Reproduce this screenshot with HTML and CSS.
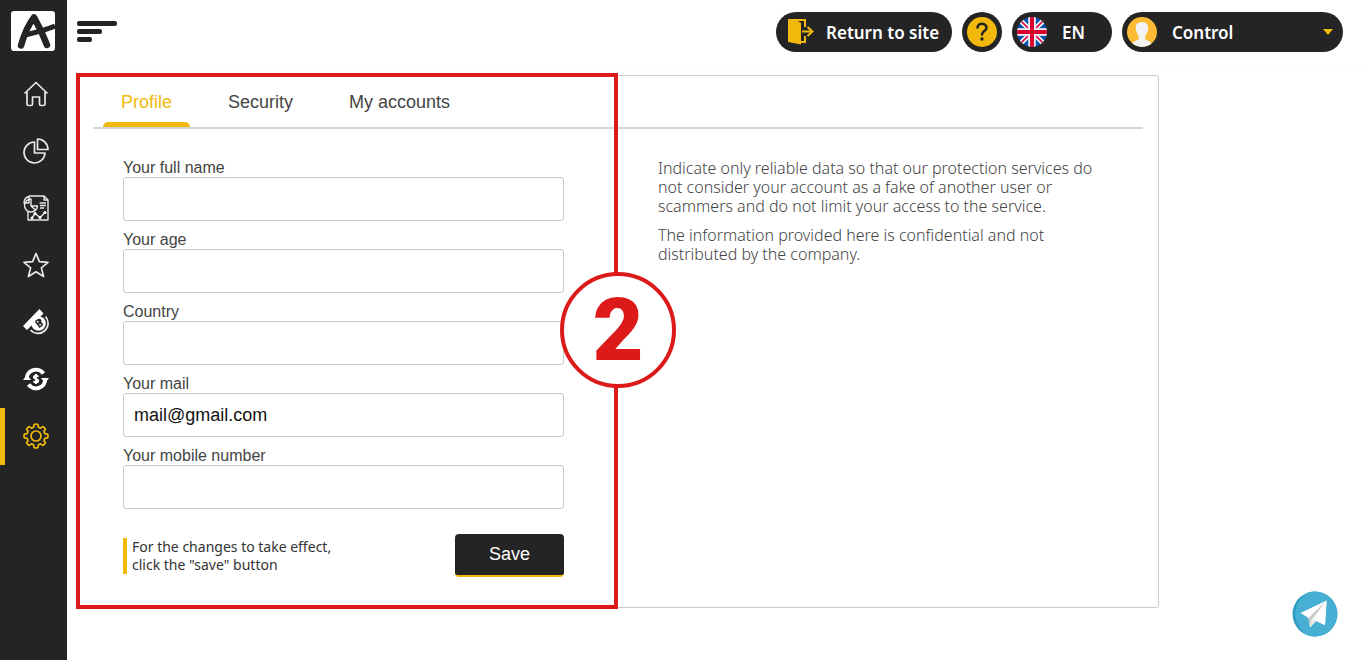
FILE: index.html
```html
<!DOCTYPE html>
<html lang="en">
<head>
<meta charset="utf-8">
<title>Profile settings</title>
<link rel="stylesheet" href="styles.css">
</head>
<body>
<aside class="sidebar">
  <a class="logo" href="#" aria-label="Home page">
    <svg width="44" height="40" viewBox="0 0 44 40"><rect width="44" height="40" rx="3" fill="#fff"/><path d="M10 34.500C13 24 17 14 23 6.500C28 15 33 26 36 34" fill="none" stroke="#242424" stroke-width="6.500" stroke-linecap="round" stroke-linejoin="round"/><path d="M12 24.500C20 22.500 32 20 44 15" fill="none" stroke="#242424" stroke-width="5"/></svg>
  </a>
  <nav class="menu" aria-label="Main">
    <a href="#" aria-label="Dashboard"><svg viewBox="0 0 26 26"><path d="M1.500 12.500 13 1.500 24.500 12.500M4 11V23Q4 24.500 5.500 24.500H8Q9.500 24.500 9.500 23V16H16.500V23Q16.500 24.500 18 24.500H20.500Q22 24.500 22 23V11" /></svg></a>
    <a href="#" aria-label="Statistics"><svg viewBox="0 0 26 26"><path d="M11.500 4A10.500 10.500 0 1 0 22 15H11.500Z"/><path d="M14.500 1V11.500H25A10.500 10.500 0 0 0 14.500 1Z"/></svg></a>
    <a class="report" href="#" aria-label="Reports"><svg viewBox="0 0 26 26"><path d="M6 1H21L25 5V25H5V17M21 1V5H25"/><path d="M8 4A6.500 6.500 0 1 0 14.500 11H8ZM6 1.500V8H1A6 6 0 0 1 6 1.500ZM8 11 13 15.500M16.500 8H23M17 10.500H23M17 13H21"/><path d="M9 23 12 18.500 17 22.500 22 17.500"/><g class="solid"><circle cx="9" cy="23" r="1.500"/><circle cx="12" cy="18.500" r="1.500"/><circle cx="17" cy="22.500" r="1.500"/><circle cx="22" cy="17.500" r="1.500"/></g></svg></a>
    <a href="#" aria-label="Favourites"><svg viewBox="0 0 26 26"><path d="M13 1.500 16.400 9.700 25 10.300 18.400 15.900 20.600 24.500 13 19.800 5.400 24.500 7.600 15.900 1 10.300 9.600 9.700Z"/></svg></a>
    <a href="#" aria-label="Payouts"><svg viewBox="0 0 26 26"><path class="solid" d="M0 17 16.500 0 20.500 4.500 4 21Z"/><circle class="solid" cx="15.500" cy="14.500" r="7.300"/><path d="M22.500 7.500A9.700 9.700 0 1 1 7.500 21"/><path class="mark" d="M12.500 12.500 17 18M15 10.500 18.500 15M12.500 12.500 15 10.800C18 10 19 12.500 16 14.500C19 13 20.500 15.500 17.500 17.500L16 18.500M14 15 16 14"/></svg></a>
    <a href="#" aria-label="Exchange"><svg viewBox="0 0 26 26"><path class="ring" d="M3.700 13A9.300 9.300 0 0 1 20.500 7.500M22.300 13A9.300 9.300 0 0 1 5.500 18.500"/><path class="solid" d="M0 14 4 8.500 8 14ZM18 12 22 17.500 26 12Z"/><path class="dollar" d="M15.300 10.700C14.500 9.200 10.700 9.400 10.900 11.300C11 13.500 15.200 12.400 15.200 14.800C15.200 16.800 11.600 16.800 10.600 15.300M13 8V18"/></svg></a>
    <a class="active" href="#" aria-label="Settings" aria-current="page"><svg viewBox="0 0 26 26"><path d="M10.600 4.200 11.100 1.500Q13 .5 14.900 1.500L15.400 4.200 17.500 5.100 19.800 3.600Q21.800 4.200 22.400 6.200L20.900 8.500 21.800 10.600 24.500 11.100Q25.500 13 24.500 14.900L21.800 15.400 20.900 17.500 22.400 19.800Q21.800 21.800 19.800 22.400L17.500 20.900 15.400 21.800 14.900 24.500Q13 25.500 11.100 24.500L10.600 21.800 8.500 20.900 6.200 22.400Q4.200 21.800 3.600 19.800L5.100 17.500 4.200 15.400 1.500 14.900Q.5 13 1.500 11.100L4.200 10.600 5.100 8.500 3.600 6.200Q4.200 4.200 6.200 3.600L8.500 5.100Z"/><circle cx="13" cy="13" r="5"/></svg></a>
  </nav>
</aside>
<div class="page">
  <header class="topbar">
    <button class="burger" type="button" aria-label="Toggle menu"><i></i><i></i><i></i></button>
    <div class="actions">
      <a class="pill return" href="#"><svg width="28" height="26" viewBox="0 0 28 26"><path d="M0 0H18V8H16V2H10L13 4V22H16V17H18V24H13V25.500L0 23Z" fill="#f0b90b"/><path d="M14 12.500H24M19.500 8 24.500 12.500 19.500 17" fill="none" stroke="#f0b90b" stroke-width="2"/></svg>Return to site</a>
      <button class="help" type="button" aria-label="Help"><svg width="30" height="30" viewBox="0 0 30 30"><circle cx="15" cy="15" r="15" fill="#f0b90b"/><path d="M10.500 10.500C10.500 5.500 20 5.500 19.500 11C19.300 14 15 14 15 17.500" fill="none" stroke="#242424" stroke-width="2.600" stroke-linecap="round"/><circle cx="15" cy="22" r="1.700" fill="#242424"/></svg></button>
      <button class="pill language" type="button"><svg width="30" height="30" viewBox="0 0 30 30"><defs><clipPath id="flag"><circle cx="15" cy="15" r="15"/></clipPath></defs><g clip-path="url(#flag)"><path fill="#0a52ad" d="M0 0H30V30H0Z"/><path d="M2 2 28 28M28 2 2 28" stroke="#f2f2f2" stroke-width="5"/><path d="M2 2 28 28M28 2 2 28" stroke="#d80030" stroke-width="1.600"/><path d="M15 0V30M0 15H30" stroke="#f2f2f2" stroke-width="7.500"/><path d="M15 0V30M0 15H30" stroke="#d80030" stroke-width="4"/></g></svg>EN</button>
      <button class="pill account" type="button"><svg width="30" height="30" viewBox="0 0 30 30"><defs><clipPath id="face"><circle cx="15" cy="15" r="15"/></clipPath></defs><g clip-path="url(#face)"><path fill="#fdbb35" d="M0 0H30V30H0Z"/><path fill="#f2f2f2" d="M15 5C10 5 8.500 8 9 12C8.500 12 9 15 10 15.500C10.500 18 12 19 12 21C12 24 5 23 4 30H26C25 23 18 24 18 21C18 19 19.500 18 20 15.500C21 15 21.500 12 21 12C21.500 8 20 5 15 5Z"/></g></svg><span>Control</span><svg class="caret" width="10" height="6" viewBox="0 0 10 6"><path d="M0 0H10L5 6Z" fill="#f0b90b"/></svg></button>
    </div>
  </header>
  <main class="content">
    <section class="card">
      <nav class="tabs" aria-label="Settings sections">
        <a class="current" href="#">Profile</a><a href="#">Security</a><a href="#">My accounts</a>
      </nav>
      <div class="columns">
        <form class="profile">
          <div class="field"><label for="name">Your full name</label><input id="name" type="text"></div>
          <div class="field"><label for="age">Your age</label><input id="age" type="text"></div>
          <div class="field"><label for="country">Country</label><input id="country" type="text"></div>
          <div class="field"><label for="mail">Your mail</label><input id="mail" type="email" value="mail@gmail.com"></div>
          <div class="field"><label for="phone">Your mobile number</label><input id="phone" type="tel"></div>
          <div class="submit"><p>For the changes to take effect,<br>click the "save" button</p><button type="submit">Save</button></div>
        </form>
        <div class="info">
          <p>Indicate only reliable data so that our protection services do<br>not consider your account as a fake of another user or<br>scammers and do not limit your access to the service.</p>
          <p>The information provided here is confidential and not<br>distributed by the company.</p>
        </div>
      </div>
      <div class="highlight"><span class="step">2</span></div>
    </section>
  </main>
</div>
<a class="telegram" href="#" aria-label="Telegram"><svg width="46" height="46" viewBox="0 0 46 46"><circle cx="23" cy="23" r="22.500" fill="#2e9cc0"/><path d="M23 .5A22.500 22.500 0 1 1 16 44.500C-1 34 -1 12 16 1.500Q19 .5 23 .5Z" fill="#46afd3"/><path d="M8.500 22 34.500 9.500 33 34 24 30 18 36.500 16.500 27Z" fill="#fff"/><path d="M16.500 27 34.500 9.500 19.500 29 18 36.500Z" fill="#c9c9c9"/><path d="M19.500 29 34.500 9.500 24 30 18 36.500Z" fill="#e8e8e8"/><path d="M21 28.500 34.500 9.500 33 34Z" fill="#fff"/></svg></a>
</body>
</html>
```
FILE: styles.css
```css
* { box-sizing: border-box; }
body { margin: 0; min-height: 100vh; display: flex; background: #fff; color: #444; font-family: "Liberation Sans", Arial, sans-serif; }
a { color: inherit; text-decoration: none; }
button, input { font: inherit; }
button { border: 0; cursor: pointer; }
svg { display: block; flex: none; }
.sidebar { flex: none; width: 67px; background: #242424; }
.logo { display: block; padding: 11px 11px 15px; }
.menu a { display: flex; align-items: center; justify-content: center; height: 57px; padding: 0 0 2px 4px; color: #e8e8e8; }
.menu a.active { padding-left: 0; border-left: 5px solid #f0b90b; color: #f0b90b; }
.menu svg { width: 26px; height: 26px; fill: none; stroke: currentColor; stroke-width: 1.700; stroke-linejoin: round; }
.menu .report svg { stroke-width: 1.400; }
.menu .solid { fill: #fff; stroke: none; }
.menu .mark { stroke: #242424; stroke-width: 1.500; }
.menu .ring { stroke: #fff; stroke-width: 4; }
.menu .dollar { stroke: #fff; stroke-width: 2; }
.page { flex: 1; min-width: 0; }
.topbar { display: flex; align-items: flex-start; justify-content: space-between; height: 67px; padding: 12px 23px 0 10px; border-bottom: 1px solid #f9f9f9; }
.burger { display: grid; gap: 3px; padding: 9px 0; background: none; }
.burger i { width: 40px; height: 5px; border-radius: 2px; background: #242424; }
.burger i:nth-child(2) { width: 25px; }
.burger i:nth-child(3) { width: 15px; }
.actions { display: flex; gap: 10px; font: 600 17px "Noto Sans", sans-serif; }
.pill { display: flex; align-items: center; height: 40px; border-radius: 20px; background: #242424; color: #fff; white-space: nowrap; }
.return { gap: 10px; width: 176px; padding-left: 12px; }
.help { width: 40px; height: 40px; padding: 5px; border-radius: 50%; background: #242424; }
.language { gap: 15px; width: 100px; padding: 0 5px; }
.account { gap: 15px; width: 221px; padding: 0 10px 0 5px; }
.caret { margin-left: auto; }
.content { padding: 8px 10px 20px; }
.card { position: relative; max-width: 1082px; border: 1px solid #ccc; border-radius: 3px; padding: 0 15px; }
.tabs { display: flex; gap: 20px; height: 53px; padding-left: 10px; border-bottom: 2px solid #d4d4d4; font-size: 18px; line-height: 20px; }
.tabs a { display: flex; flex-direction: column; justify-content: space-between; padding-top: 16px; }
.tabs a::before { content: none; }
.tabs a { padding-left: 18px; padding-right: 18px; }
.tabs .current { color: #f0b90b; }
.tabs .current::after { content: ""; height: 5px; margin: 0 -18px; border-radius: 5px 5px 0 0; background: #f0b90b; }
.columns { display: grid; grid-template-columns: 441px 1fr; gap: 94px; padding: 29px 30px 30px; }
.profile { display: grid; gap: 8px; }
.field { display: grid; font-size: 16px; line-height: 20px; }
.field input { width: 100%; height: 44px; margin-top: -1px; margin-bottom: 1px; padding: 0 10px; border: 1px solid #c8c8c8; border-radius: 3px; background: #fff; color: #111; font-size: 18px; }
.submit { display: flex; align-items: center; justify-content: space-between; padding-top: 16px; }
.submit p { margin: 0; padding-left: 5px; border-left: 4px solid #f0b90b; color: #333; font: 14px/18px "Noto Sans", sans-serif; }
.submit button { width: 109px; height: 43px; border-bottom: 2px solid #f0b90b; border-radius: 4px; background: #242424; color: #fff; font-size: 18px; }
.info { padding-top: 1px; font: 300 16px/19px "Noto Sans", sans-serif; }
.info p { margin: 0 0 10px; white-space: nowrap; }
.highlight { position: absolute; top: -3px; bottom: -2px; left: -2px; width: 542px; border: 4px solid #dc1a1a; pointer-events: none; }
.step { position: absolute; top: 195px; right: -62px; display: grid; place-items: center; width: 116px; height: 116px; border: 4px solid #dc1a1a; border-radius: 50%; background: #fff; color: #dc1a1a; font: 900 88px/108px "Roboto", sans-serif; }
.telegram { position: fixed; right: 28px; bottom: 23px; }
```
